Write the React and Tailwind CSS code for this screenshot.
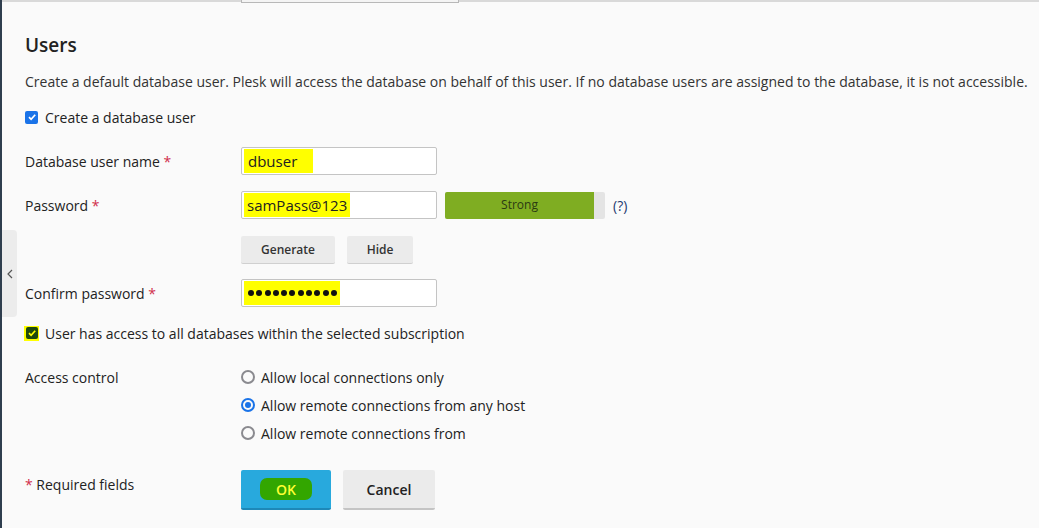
function Req() {
  return <span className="text-[#d02e4b]"> *</span>
}

function Field({ label, children }) {
  return (
    <div className="flex items-center h-[28px]">
      <div className="w-[216px] shrink-0">{label}</div>
      {children}
    </div>
  )
}

function TextBox({ children }) {
  return (
    <div className="w-[196px] h-[28px] bg-white border border-[#c4c4c4] rounded-[2px] flex items-center px-[2px]">
      {children}
    </div>
  )
}

function Radio({ checked, label }) {
  return (
    <div className="flex items-center h-[28px]">
      {checked ? (
        <span className="w-[14px] h-[14px] rounded-full border-2 border-[#1a73e8] flex items-center justify-center">
          <span className="w-[6px] h-[6px] rounded-full bg-[#1a73e8]" />
        </span>
      ) : (
        <span className="w-[14px] h-[14px] rounded-full border-2 border-[#8a8a8f]" />
      )}
      <span className="ml-[6px]">{label}</span>
    </div>
  )
}

const dots = [0, 1, 2, 3, 4, 5, 6, 7, 8, 9, 10]

export default function App() {
  return (
    <div
      className="relative w-[1039px] h-[528px] bg-[#fafafa] text-[14px] text-[#222] overflow-hidden border-l-2 border-[#2f3e4e]"
      style={{ fontFamily: '"Open Sans", "Noto Sans", sans-serif' }}
    >
      {/* top edge */}
      <div className="h-[2px] bg-[#d9d9d9]" />
      <div className="absolute left-[239px] top-0 w-[218px] h-[3px] border border-t-0 border-[#b8b8b8] bg-[#f4f4f4]" />

      {/* sidebar toggle */}
      <div className="absolute left-0 top-[230px] w-[15px] h-[87px] bg-[#ececec] rounded-r-[4px] flex items-center justify-center text-[#555]">
        <svg width="6" height="10" viewBox="0 0 6 10"><path d="M5 1 L1 5 L5 9" fill="none" stroke="#555" strokeWidth="1.2" /></svg>
      </div>

      <div className="pl-[23px] pt-[29px]">
        <h2 className="text-[19px] font-semibold text-[#222] leading-[28px]">Users</h2>
        <p className="mt-[13px] leading-[20px] text-[#333] whitespace-nowrap">
          Create a default database user. Plesk will access the database on behalf of this user. If no database users are assigned to the database, it is not accessible.
        </p>

        <label className="mt-[15px] flex items-center h-[20px]">
          <span className="w-[13px] h-[13px] rounded-[2px] bg-[#1a73e8] flex items-center justify-center">
            <svg width="10" height="10" viewBox="0 0 10 10"><path d="M2 5.2 L4.1 7.3 L8.2 2.8" fill="none" stroke="white" strokeWidth="1.7" /></svg>
          </span>
          <span className="ml-[7px]">Create a database user</span>
        </label>

        <div className="mt-[20px] flex flex-col">
          <Field label={<>Database user name<Req /></>}>
            <TextBox>
              <span className="bg-[#ffff00] pl-[4px] pr-[16px] h-[24px] flex items-center text-[15px]">dbuser</span>
            </TextBox>
          </Field>

          <div className="mt-[16px]">
            <Field label={<>Password<Req /></>}>
              <TextBox>
                <span className="bg-[#ffff00] px-[3px] h-[24px] flex items-center text-[15px]">samPass@123</span>
              </TextBox>
              <div className="ml-[8px] w-[160px] h-[27px] bg-[#e4e4e4] flex rounded-[2px] overflow-hidden">
                <div className="w-[149px] bg-[#7fad22] text-[#2b3a12] text-[12px] flex items-center justify-center">Strong</div>
              </div>
              <span className="ml-[8px] text-[#1e3a70]">(?)</span>
            </Field>
          </div>

          <div className="mt-[17px] flex pl-[216px] gap-[12px]">
            <button className="w-[94px] h-[28px] bg-[#ebebeb] border-b border-[#d0d0d0] text-[12px] font-semibold text-[#333] rounded-[2px]">Generate</button>
            <button className="w-[66px] h-[28px] bg-[#ebebeb] border-b border-[#d0d0d0] text-[12px] font-semibold text-[#333] rounded-[2px]">Hide</button>
          </div>

          <div className="mt-[15px]">
            <Field label={<>Confirm password<Req /></>}>
              <TextBox>
                <span className="bg-[#ffff00] pl-[4px] pr-[3px] h-[24px] flex items-center gap-[2.3px]">
                  {dots.map((d) => (
                    <span key={d} className="w-[6px] h-[6px] rounded-full bg-[#111]" />
                  ))}
                </span>
              </TextBox>
            </Field>
          </div>
        </div>

        <label className="mt-[16px] flex items-center h-[20px]">
          <span className="w-[15px] h-[15px] bg-[#ffff00] flex items-center justify-center -ml-[1px]">
            <span className="w-[12px] h-[12px] rounded-[2px] bg-[#1f4a0e] flex items-center justify-center">
              <svg width="10" height="10" viewBox="0 0 10 10"><path d="M2 5.2 L4.1 7.3 L8.2 2.8" fill="none" stroke="#ffff00" strokeWidth="1.7" /></svg>
            </span>
          </span>
          <span className="ml-[6px]">User has access to all databases within the selected subscription</span>
        </label>

        <div className="mt-[20px] flex">
          <div className="w-[216px] shrink-0 h-[28px] flex items-center">Access control</div>
          <div className="flex flex-col">
            <Radio label="Allow local connections only" />
            <Radio checked label="Allow remote connections from any host" />
            <Radio label="Allow remote connections from" />
          </div>
        </div>

        <div className="mt-[23px] flex">
          <div className="w-[216px] shrink-0 pt-[4px]"><span className="text-[#d02e4b]">*</span> Required fields</div>
          <div className="flex gap-[12px]">
            <button className="w-[90px] h-[40px] bg-[#28a9dd] border-b-2 border-[#1d88b8] rounded-[2px] flex items-center justify-center">
              <span className="bg-[#33a600] text-[#ffff33] font-semibold px-[16px] h-[22px] rounded-[7px] flex items-center">OK</span>
            </button>
            <button className="w-[92px] h-[40px] bg-[#ebebeb] border-b-2 border-[#c4c4c4] rounded-[2px] text-[#222] font-semibold">Cancel</button>
          </div>
        </div>
      </div>
    </div>
  )
}
